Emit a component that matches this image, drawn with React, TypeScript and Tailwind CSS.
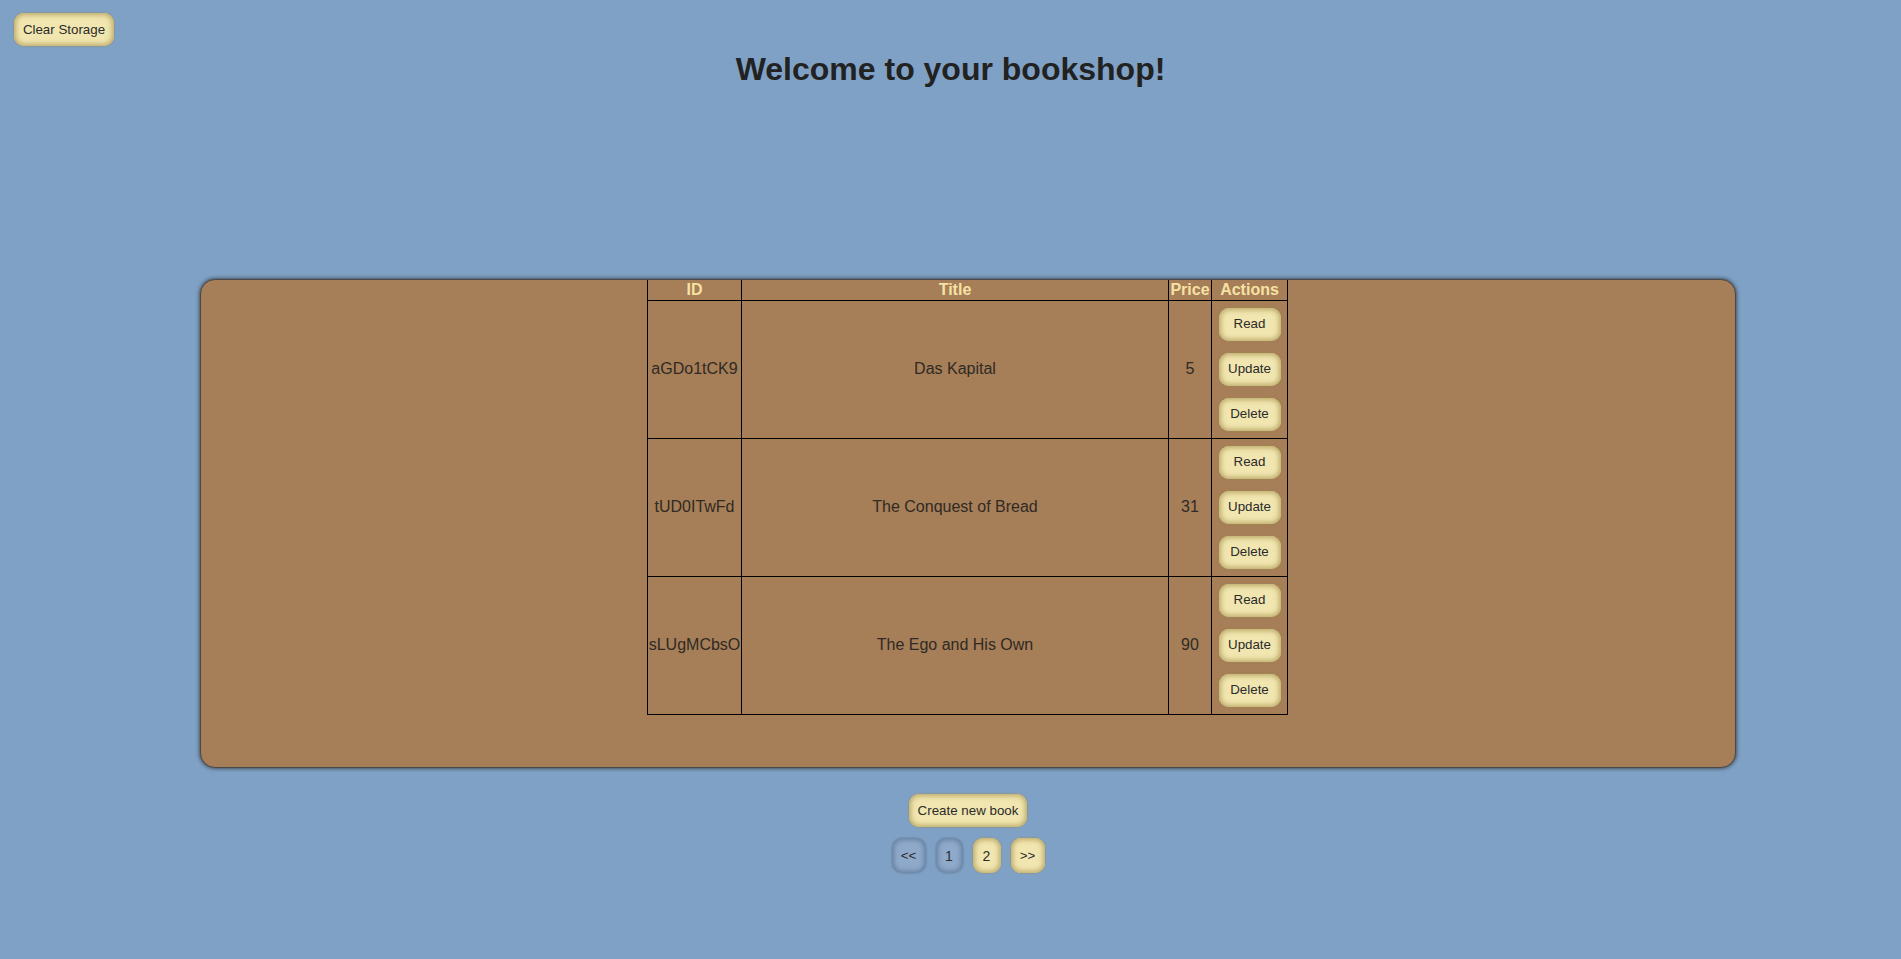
const books = [
  { id: "aGDo1tCK9", title: "Das Kapital", price: 5 },
  { id: "tUD0ITwFd", title: "The Conquest of Bread", price: 31 },
  { id: "sLUgMCbsO", title: "The Ego and His Own", price: 90 },
];

const yellowBtn =
  "rounded-[10px] bg-[#f1e6b0] shadow-[inset_0_0_5px_2px_#bcaa6a,0_0_2px_#9a8a55] text-[#2b2b2b] text-[13.33px] leading-none";
const blueBtn =
  "rounded-[10px] bg-[#8fa9cb] shadow-[inset_0_0_5px_2px_#64809f,0_0_2px_#56708f] text-[#2b2b2b] text-[13.33px] leading-none";

export default function App() {
  return (
    <div className="min-h-screen bg-[#7fa1c5] font-['Liberation_Sans',Arial,sans-serif] pb-10">
      <div className="pt-[13px] pl-[14px]">
        <button className={`${yellowBtn} w-[100px] h-[33px]`}>Clear Storage</button>
      </div>
      <h1 className="mt-[5px] text-center text-[32px] leading-[37px] font-bold text-[#222]">
        Welcome to your bookshop!
      </h1>

      <div className="ml-[200px] mt-[191px] w-[1536px] h-[489px] rounded-[15px] bg-[#a67e57] border border-[#4a4a4a] shadow-[0_0_4px_#2a2a2a] flex justify-center items-start pr-[1px]">
        <table className="w-[640px] border-collapse table-fixed text-[16px]">
          <colgroup>
            <col className="w-[94px]" />
            <col className="w-[427px]" />
            <col className="w-[43px]" />
            <col className="w-[76px]" />
          </colgroup>
          <thead>
            <tr className="h-[20px]">
              {["ID", "Title", "Price", "Actions"].map((h) => (
                <th
                  key={h}
                  className="border border-t-0 border-black p-0 font-bold text-[#f5e2a4] leading-[19px] whitespace-nowrap"
                >
                  {h}
                </th>
              ))}
            </tr>
          </thead>
          <tbody>
            {books.map((b) => (
              <tr key={b.id} className="h-[138px]">
                <td className="border border-black p-0 text-center text-[#2f2a25] whitespace-nowrap">{b.id}</td>
                <td className="border border-black p-0 text-center text-[#2f2a25]">{b.title}</td>
                <td className="border border-black p-0 text-center text-[#2f2a25]">{b.price}</td>
                <td className="border border-black p-0">
                  <div className="flex flex-col items-center gap-[12px] py-[5px]">
                    <button className={`${yellowBtn} w-[62px] h-[33px]`}>Read</button>
                    <button className={`${yellowBtn} w-[62px] h-[33px]`}>Update</button>
                    <button className={`${yellowBtn} w-[62px] h-[33px]`}>Delete</button>
                  </div>
                </td>
              </tr>
            ))}
          </tbody>
        </table>
      </div>

      <div className="ml-[200px] w-[1536px] flex flex-col items-center">
        <button className={`${yellowBtn} mt-[26px] w-[118px] h-[33px]`}>Create new book</button>
        <div className="mt-[11px] flex gap-[10px]">
          <button className={`${blueBtn} w-[34px] h-[35px]`}>&lt;&lt;</button>
          <button className={`${blueBtn} w-[27px] h-[35px] text-[14px]`}>1</button>
          <button className={`${yellowBtn} w-[28px] h-[35px] text-[14px]`}>2</button>
          <button className={`${yellowBtn} w-[34px] h-[35px]`}>&gt;&gt;</button>
        </div>
      </div>
    </div>
  );
}
